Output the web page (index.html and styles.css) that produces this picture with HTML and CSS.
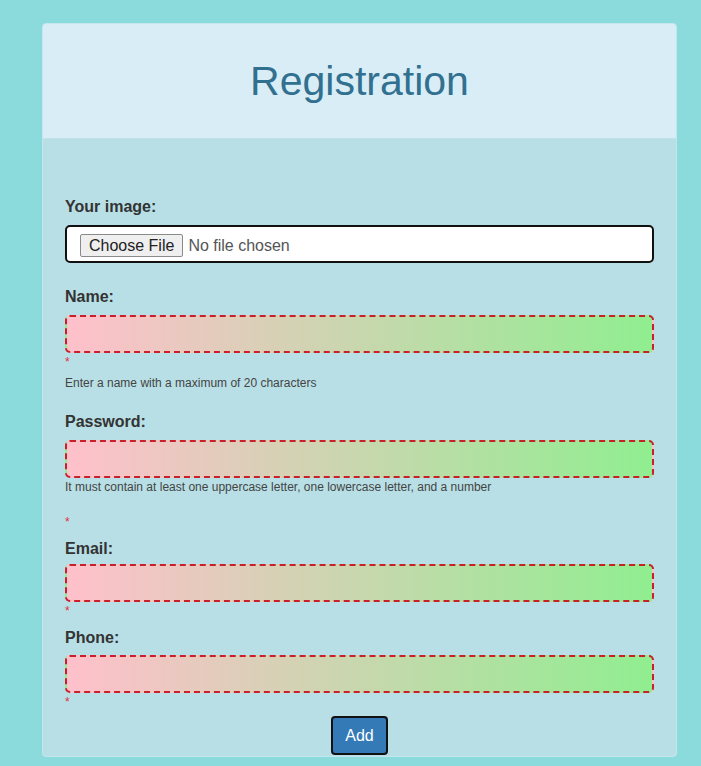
FILE: index.html
```html
<!DOCTYPE html>
<html lang="en">
<head>
<meta charset="utf-8">
<title>Registration</title>
<link rel="stylesheet" href="styles.css">
</head>
<body>
<div class="card">
  <div class="card-header">
    <h1 class="title">Registration</h1>
  </div>
  <form class="card-body">
    <div class="field field-image">
      <label class="label" for="img">Your image:</label>
      <input class="file-input" type="file" id="img">
    </div>
    <div class="field field-name">
      <label class="label" for="name">Name:</label>
      <input class="text-input" type="text" id="name">
      <span class="req">*</span>
      <p class="hint hint-name">Enter a name with a maximum of 20 characters</p>
    </div>
    <div class="field field-password">
      <label class="label" for="pw">Password:</label>
      <input class="text-input" type="password" id="pw">
      <p class="hint hint-pw">It must contain at least one uppercase letter, one lowercase letter, and a number</p>
      <span class="req req-pw">*</span>
    </div>
    <div class="field field-email">
      <label class="label label-tight" for="email">Email:</label>
      <input class="text-input" type="email" id="email">
      <span class="req">*</span>
    </div>
    <div class="field field-phone">
      <label class="label label-phone" for="phone">Phone:</label>
      <input class="text-input" type="tel" id="phone">
      <span class="req">*</span>
    </div>
    <div class="actions">
      <button class="btn" type="button">Add</button>
    </div>
  </form>
</div>
</body>
</html>
```

FILE: styles.css
```css
html, body {
  margin: 0;
  padding: 0;
}
body {
  background: #8cdbdc;
  font-family: "Liberation Sans", Arial, sans-serif;
  color: #333;
  padding-top: 23px;
  padding-left: 42px;
}
.card {
  width: 633px;
  border: 1px solid #c4e6ee;
  border-radius: 4px;
  background: #b8dfe5;
  overflow: hidden;
}
.card-header {
  height: 114px;
  background: #d9edf7;
  border-bottom: 1px solid #c2e2ea;
  display: flex;
  align-items: center;
  justify-content: center;
}
.title {
  margin: 0;
  font-weight: normal;
  font-size: 41px;
  line-height: 48px;
  color: #31708f;
}
.card-body {
  display: block;
  padding: 58px 22px 0 22px;
}
.field {
  display: flex;
  flex-direction: column;
}
.label {
  display: block;
  font-weight: bold;
  font-size: 16px;
  line-height: 20px;
  margin-bottom: 8px;
  color: #333;
}
.label-tight {
  margin-bottom: 5px;
}
.label-phone {
  margin-bottom: 7px;
}
.file-input {
  box-sizing: border-box;
  width: 589px;
  height: 38px;
  border: 2px solid #111;
  border-radius: 5px;
  background: #fff;
  padding: 0 0 0 13px;
  font-family: "Liberation Sans", Arial, sans-serif;
  font-size: 16px;
  color: #555;
}
.file-input::file-selector-button {
  font-family: "Liberation Sans", Arial, sans-serif;
  font-size: 16px;
  color: #222;
  background: #efefef;
  border: 1px solid #8a8a8a;
  border-radius: 2px;
  padding: 1px 8px;
  margin: 7px 5px 0 0;
  height: 23px;
}
.text-input {
  box-sizing: border-box;
  width: 589px;
  height: 38px;
  border: 2px dashed #c8202a;
  border-radius: 5px;
  background: linear-gradient(to right, #ffc0cb, #90ee90);
  outline: none;
}
.req {
  display: block;
  color: #e0313a;
  font-size: 12px;
  line-height: 14px;
  margin-top: 2px;
}
.hint {
  margin: 0;
  font-size: 12px;
  line-height: 14px;
  color: #444;
}
.hint-name {
  margin-top: 7px;
}
.hint-pw {
  margin-top: 2px;
}
.req-pw {
  margin-top: 21px;
}
.field-name {
  margin-top: 24px;
}
.field-password {
  margin-top: 22px;
}
.field-email {
  margin-top: 10px;
}
.field-phone {
  margin-top: 10px;
}
.actions {
  display: flex;
  justify-content: center;
  margin-top: 7px;
  padding-bottom: 1px;
}
.btn {
  font-family: "Liberation Sans", Arial, sans-serif;
  font-size: 16px;
  color: #fff;
  background: #337ab7;
  border: 2px solid #111;
  border-radius: 4px;
  height: 39px;
  padding: 0 12px;
  cursor: pointer;
}
```
